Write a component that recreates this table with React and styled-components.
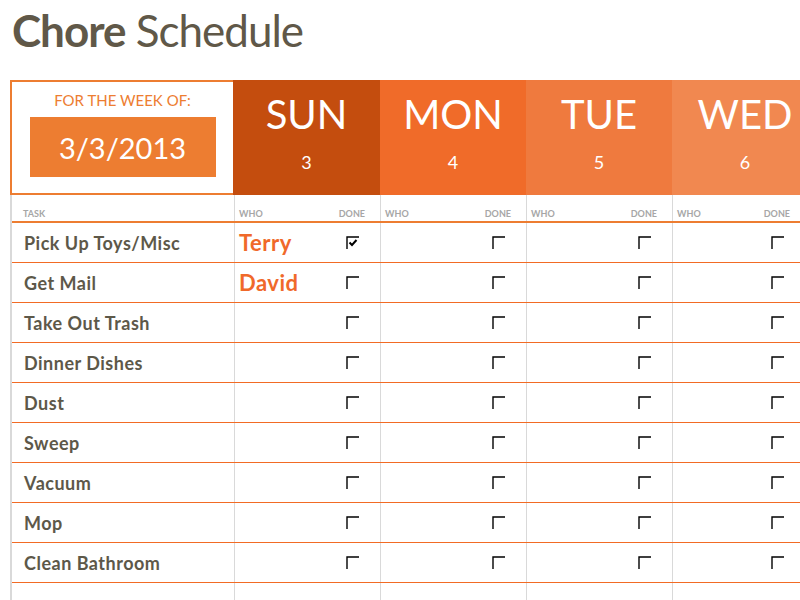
import React from "react";
import styled, { createGlobalStyle } from "styled-components";

const GlobalStyle = createGlobalStyle`
  html, body {
    margin: 0;
    padding: 0;
    background: #fff;
  }
  body {
    font-family: Lato, "Open Sans", sans-serif;
    overflow: hidden;
  }
`;

const Page = styled.div`
  width: 800px;
  height: 600px;
  overflow: hidden;
  padding-left: 10px;
  box-sizing: border-box;
`;

const Title = styled.h1`
  margin: 0;
  height: 80px;
  padding: 4px 0 0 2px;
  box-sizing: border-box;
  font-size: 44px;
  line-height: 52px;
  font-weight: 400;
  letter-spacing: -1px;
  color: #605848;
  white-space: nowrap;
  b {
    font-weight: 700;
  }
`;

const Header = styled.div`
  display: grid;
  grid-template-columns: 223px 147px 146px 146px 146px;
  height: 115px;
  width: 808px;
`;

const WeekBox = styled.div`
  border: 2px solid #ed7d31;
  border-right: none;
  display: flex;
  flex-direction: column;
  align-items: center;
  padding-top: 9px;
  box-sizing: border-box;
`;

const WeekLabel = styled.div`
  font-size: 15px;
  line-height: 18px;
  color: #ed7d31;
`;

const DateBox = styled.div`
  margin-top: 8px;
  width: 186px;
  height: 60px;
  background: #ed7d31;
  color: #fff;
  font-size: 29px;
  display: flex;
  align-items: center;
  justify-content: center;
`;

const DayHead = styled.div`
  background: ${(p) => p.$bg};
  color: #fff;
  display: flex;
  flex-direction: column;
  align-items: center;
  padding-top: 10px;
  box-sizing: border-box;
`;

const DayName = styled.div`
  font-size: 40px;
  line-height: 48px;
`;

const DayNum = styled.div`
  margin-top: 13px;
  font-size: 18px;
  line-height: 22px;
`;

const Table = styled.div`
  border-left: 2px solid #d9d9d9;
  width: 810px;
`;

const Row = styled.div`
  display: grid;
  grid-template-columns: 222px repeat(4, 146px);
  height: ${(p) => (p.$head ? "28px" : "40px")};
  box-sizing: border-box;
  border-bottom: ${(p) => (p.$head ? "2px solid #ed7d31" : "1px solid #f26b24")};
`;

const TaskCell = styled.div`
  display: flex;
  align-items: ${(p) => (p.$head ? "flex-end" : "center")};
  padding: ${(p) => (p.$head ? "0 0 2px 11px" : "0 0 0 12px")};
  font-size: ${(p) => (p.$head ? "9px" : "18px")};
  line-height: ${(p) => (p.$head ? "11px" : "20px")};
  letter-spacing: ${(p) => (p.$head ? "0" : "0.5px")};
  font-weight: 700;
  color: ${(p) => (p.$head ? "#a6a6a6" : "#5d5849")};
  white-space: nowrap;
`;

const DayCell = styled.div`
  border-left: 1px solid #d9d9d9;
  display: flex;
  justify-content: space-between;
  align-items: ${(p) => (p.$head ? "flex-end" : "center")};
  padding: ${(p) => (p.$head ? `0 ${p.$right - 6}px 2px 4px` : `0 ${p.$right}px 0 4px`)};
`;

const HeadLabel = styled.span`
  font-size: 9px;
  line-height: 11px;
  font-weight: 700;
  color: #a6a6a6;
`;

const Who = styled.span`
  font-size: 22px;
  letter-spacing: 0.5px;
  font-weight: 700;
  color: #f0692a;
`;

const Box = ({ checked }) => (
  <svg width="13" height="13" viewBox="0 0 13 13">
    <path d="M1 13 V1 H13" fill="none" stroke="#000" strokeWidth="1.4" />
    {checked && (
      <path d="M3.5 6.5 L6 9 L10.5 4" fill="none" stroke="#000" strokeWidth="2" />
    )}
  </svg>
);

const days = [
  { name: "SUN", num: 3, bg: "#c44d0e" },
  { name: "MON", num: 4, bg: "#f06b29" },
  { name: "TUE", num: 5, bg: "#ef7a3e" },
  { name: "WED", num: 6, bg: "#f18850" },
];

const tasks = [
  { name: "Pick Up Toys/Misc", who: "Terry", done: true },
  { name: "Get Mail", who: "David" },
  { name: "Take Out Trash" },
  { name: "Dinner Dishes" },
  { name: "Dust" },
  { name: "Sweep" },
  { name: "Vacuum" },
  { name: "Mop" },
  { name: "Clean Bathroom" },
  { name: "" },
];

const rightPad = (i) => (i === 3 ? 34 : 21);

const App = () => {
  return (
    <Page>
      <GlobalStyle />
      <Title>
        <b>Chore</b> Schedule
      </Title>
      <Header>
        <WeekBox>
          <WeekLabel>FOR THE WEEK OF:</WeekLabel>
          <DateBox>3/3/2013</DateBox>
        </WeekBox>
        {days.map((d) => (
          <DayHead key={d.name} $bg={d.bg}>
            <DayName>{d.name}</DayName>
            <DayNum>{d.num}</DayNum>
          </DayHead>
        ))}
      </Header>
      <Table>
        <Row $head>
          <TaskCell $head>TASK</TaskCell>
          {days.map((d, i) => (
            <DayCell key={d.name} $head $right={rightPad(i)}>
              <HeadLabel>WHO</HeadLabel>
              <HeadLabel>DONE</HeadLabel>
            </DayCell>
          ))}
        </Row>
        {tasks.map((t, r) => (
          <Row key={r}>
            <TaskCell>{t.name}</TaskCell>
            {days.map((d, i) => (
              <DayCell key={d.name} $right={rightPad(i)}>
                <Who>{i === 0 ? t.who : ""}</Who>
                {t.name && <Box checked={i === 0 && t.done} />}
              </DayCell>
            ))}
          </Row>
        ))}
      </Table>
    </Page>
  );
};

export default App;
